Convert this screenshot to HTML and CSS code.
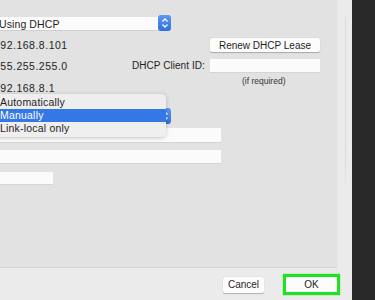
FILE: index.html
```html
<!DOCTYPE html>
<html>
<head>
<meta charset="utf-8">
<link rel="stylesheet" href="styles.css">
</head>
<body>
<div class="screen">
  <div class="window">
    <div class="top">
      <div class="inner">
        <div class="row row-a">
          <div class="select">
            <span class="select-text">Using DHCP</span>
            <span class="stepper">
              <svg width="8" height="12" viewBox="0 0 8 12"><path d="M1.5 4.5 L4 2 L6.5 4.5 M1.5 7.5 L4 10 L6.5 7.5" fill="none" stroke="#fff" stroke-width="1.3"/></svg>
            </span>
          </div>
        </div>
        <div class="row row-b">
          <span class="value cut">192.168.8.101</span>
          <button class="btn renew">Renew DHCP Lease</button>
        </div>
        <div class="row row-c">
          <span class="value cut">255.255.255.0</span>
          <span class="label">DHCP Client ID:</span>
          <span class="field client"></span>
        </div>
        <div class="row row-d">
          <span class="value cut">192.168.8.1</span>
          <span class="hint">(if required)</span>
        </div>
        <div class="row row-e">
          <div class="select select-ipv4">
            <span class="select-text">Manually</span>
            <span class="stepper">
              <svg width="8" height="12" viewBox="0 0 8 12"><path d="M1.5 4.5 L4 2 L6.5 4.5 M1.5 7.5 L4 10 L6.5 7.5" fill="none" stroke="#fff" stroke-width="1.3"/></svg>
            </span>
          </div>
        </div>
        <div class="row row-f"><span class="field wide"></span></div>
        <div class="row row-g"><span class="field wide"></span></div>
        <div class="row row-h"><span class="field short"></span></div>

        <div class="menu">
          <div class="item">Automatically</div>
          <div class="item selected">Manually</div>
          <div class="item">Link-local only</div>
        </div>
      </div>
      <div class="gutter"><span class="track"></span></div>
    </div>
    <div class="footer">
      <button class="btn cancel">Cancel</button>
      <span class="ok-frame"><button class="btn ok">OK</button></span>
    </div>
  </div>
  <div class="dark"></div>
</div>
</body>
</html>
```

FILE: styles.css
```css
* { box-sizing: border-box; }
html, body { margin: 0; padding: 0; }
body {
  width: 375px;
  height: 300px;
  overflow: hidden;
  font-family: "Liberation Sans", Arial, sans-serif;
  font-size: 10px;
  color: #1e1e1e;
  background: #2a2a2a;
}
.screen { display: flex; width: 375px; height: 300px; }
.window {
  width: 352px;
  display: flex;
  flex-direction: column;
  background: #ebebeb;
}
.dark { flex: 1; background: #292929; }
.top { display: flex; height: 268px; }
.inner {
  position: relative;
  width: 337px;
  height: 268px;
  background: #e2e2e2;
  border-bottom: 1px solid #d6d6d6;
  overflow: hidden;
  padding-top: 15px;
}
.gutter {
  flex: 1;
  display: flex;
  justify-content: center;
  padding-top: 17px;
  border-left: 1px solid #e6e6e6;
}
.track {
  width: 1px;
  height: 176px;
  background: linear-gradient(#dadada, #d9d9d9 80%, #ebebeb);
}
.row { display: flex; align-items: center; }
.row-a { height: 16px; }
.select {
  position: relative;
  display: flex;
  align-items: center;
  width: 171px;
  height: 16px;
  padding-top: 2px;
}
.select::before {
  content: "";
  position: absolute;
  left: 0; right: 12px; top: 2px; bottom: 1px;
  background: #fbfbfb;
  box-shadow: 0 1px 0 #d0d0d0;
}
.select-text { position: relative; font-size: 10.5px; margin-left: -1px; letter-spacing: 0.1px; }
.stepper {
  position: absolute;
  right: 0; top: 0;
  width: 13px; height: 16px;
  border-radius: 3px;
  background: linear-gradient(#5b98f2, #2f6fe0);
  display: flex; align-items: center; justify-content: center;
}
.row-b { margin-top: 7px; height: 14px; }
.value { font-size: 10.5px; letter-spacing: 0.5px; }
.cut { margin-left: -6px; width: 216px; }
.btn {
  font-family: "Liberation Sans", Arial, sans-serif;
  font-size: 10px;
  color: #1e1e1e;
  background: #fcfcfc;
  border: none;
  border-radius: 2px;
  box-shadow: 0 0.5px 1px rgba(0,0,0,0.25);
  padding: 0;
}
.renew { width: 110px; height: 14px; }
.row-c { margin-top: 7px; height: 13px; }
.row-c .cut { width: 138px; }
.label { width: 78px; font-size: 10px; letter-spacing: 0.05px; }
.field { display: block; background: #fbfbfb; box-shadow: 0 1px 0 #d4d4d4; }
.client { width: 110px; height: 13px; }
.row-d { height: 20px; margin-top: 2px; }
.row-d .value { align-self: flex-end; width: 248px; }
.hint { font-size: 8.5px; align-self: flex-start; margin-top: 2px; color: #333; }
.row-e { margin-top: 14px; height: 16px; }
.select-ipv4 .select-text { visibility: hidden; }
.row-f { margin-top: 4px; }
.row-f .field, .row-g .field { width: 221px; height: 14px; }
.row-g { margin-top: 8px; }
.row-g .field { height: 13px; }
.row-h { margin-top: 9px; }
.short { width: 53px; height: 12px; }
.menu {
  position: absolute;
  left: -5px; top: 94px;
  width: 171px;
  height: 43px;
  background: rgba(238,238,238,0.97);
  border-radius: 5px;
  box-shadow: 0 1px 4px rgba(0,0,0,0.22);
  padding-top: 2px;
}
.item { height: 13px; line-height: 13px; padding-left: 5px; font-size: 10.5px; letter-spacing: 0.2px; }
.item.selected { background: #3478e6; color: #fff; }
.footer {
  flex: 1;
  display: flex;
  align-items: center;
  padding-left: 223px;
  gap: 19px;
  padding-top: 1px;
}
.cancel { width: 41px; height: 16px; }
.ok-frame {
  display: flex;
  width: 57px; height: 21px;
  border: 3px solid #22e022;
  box-shadow: 0 0 1px #22e022;
}
.ok { flex: 1; border-radius: 0; box-shadow: none; }
```
